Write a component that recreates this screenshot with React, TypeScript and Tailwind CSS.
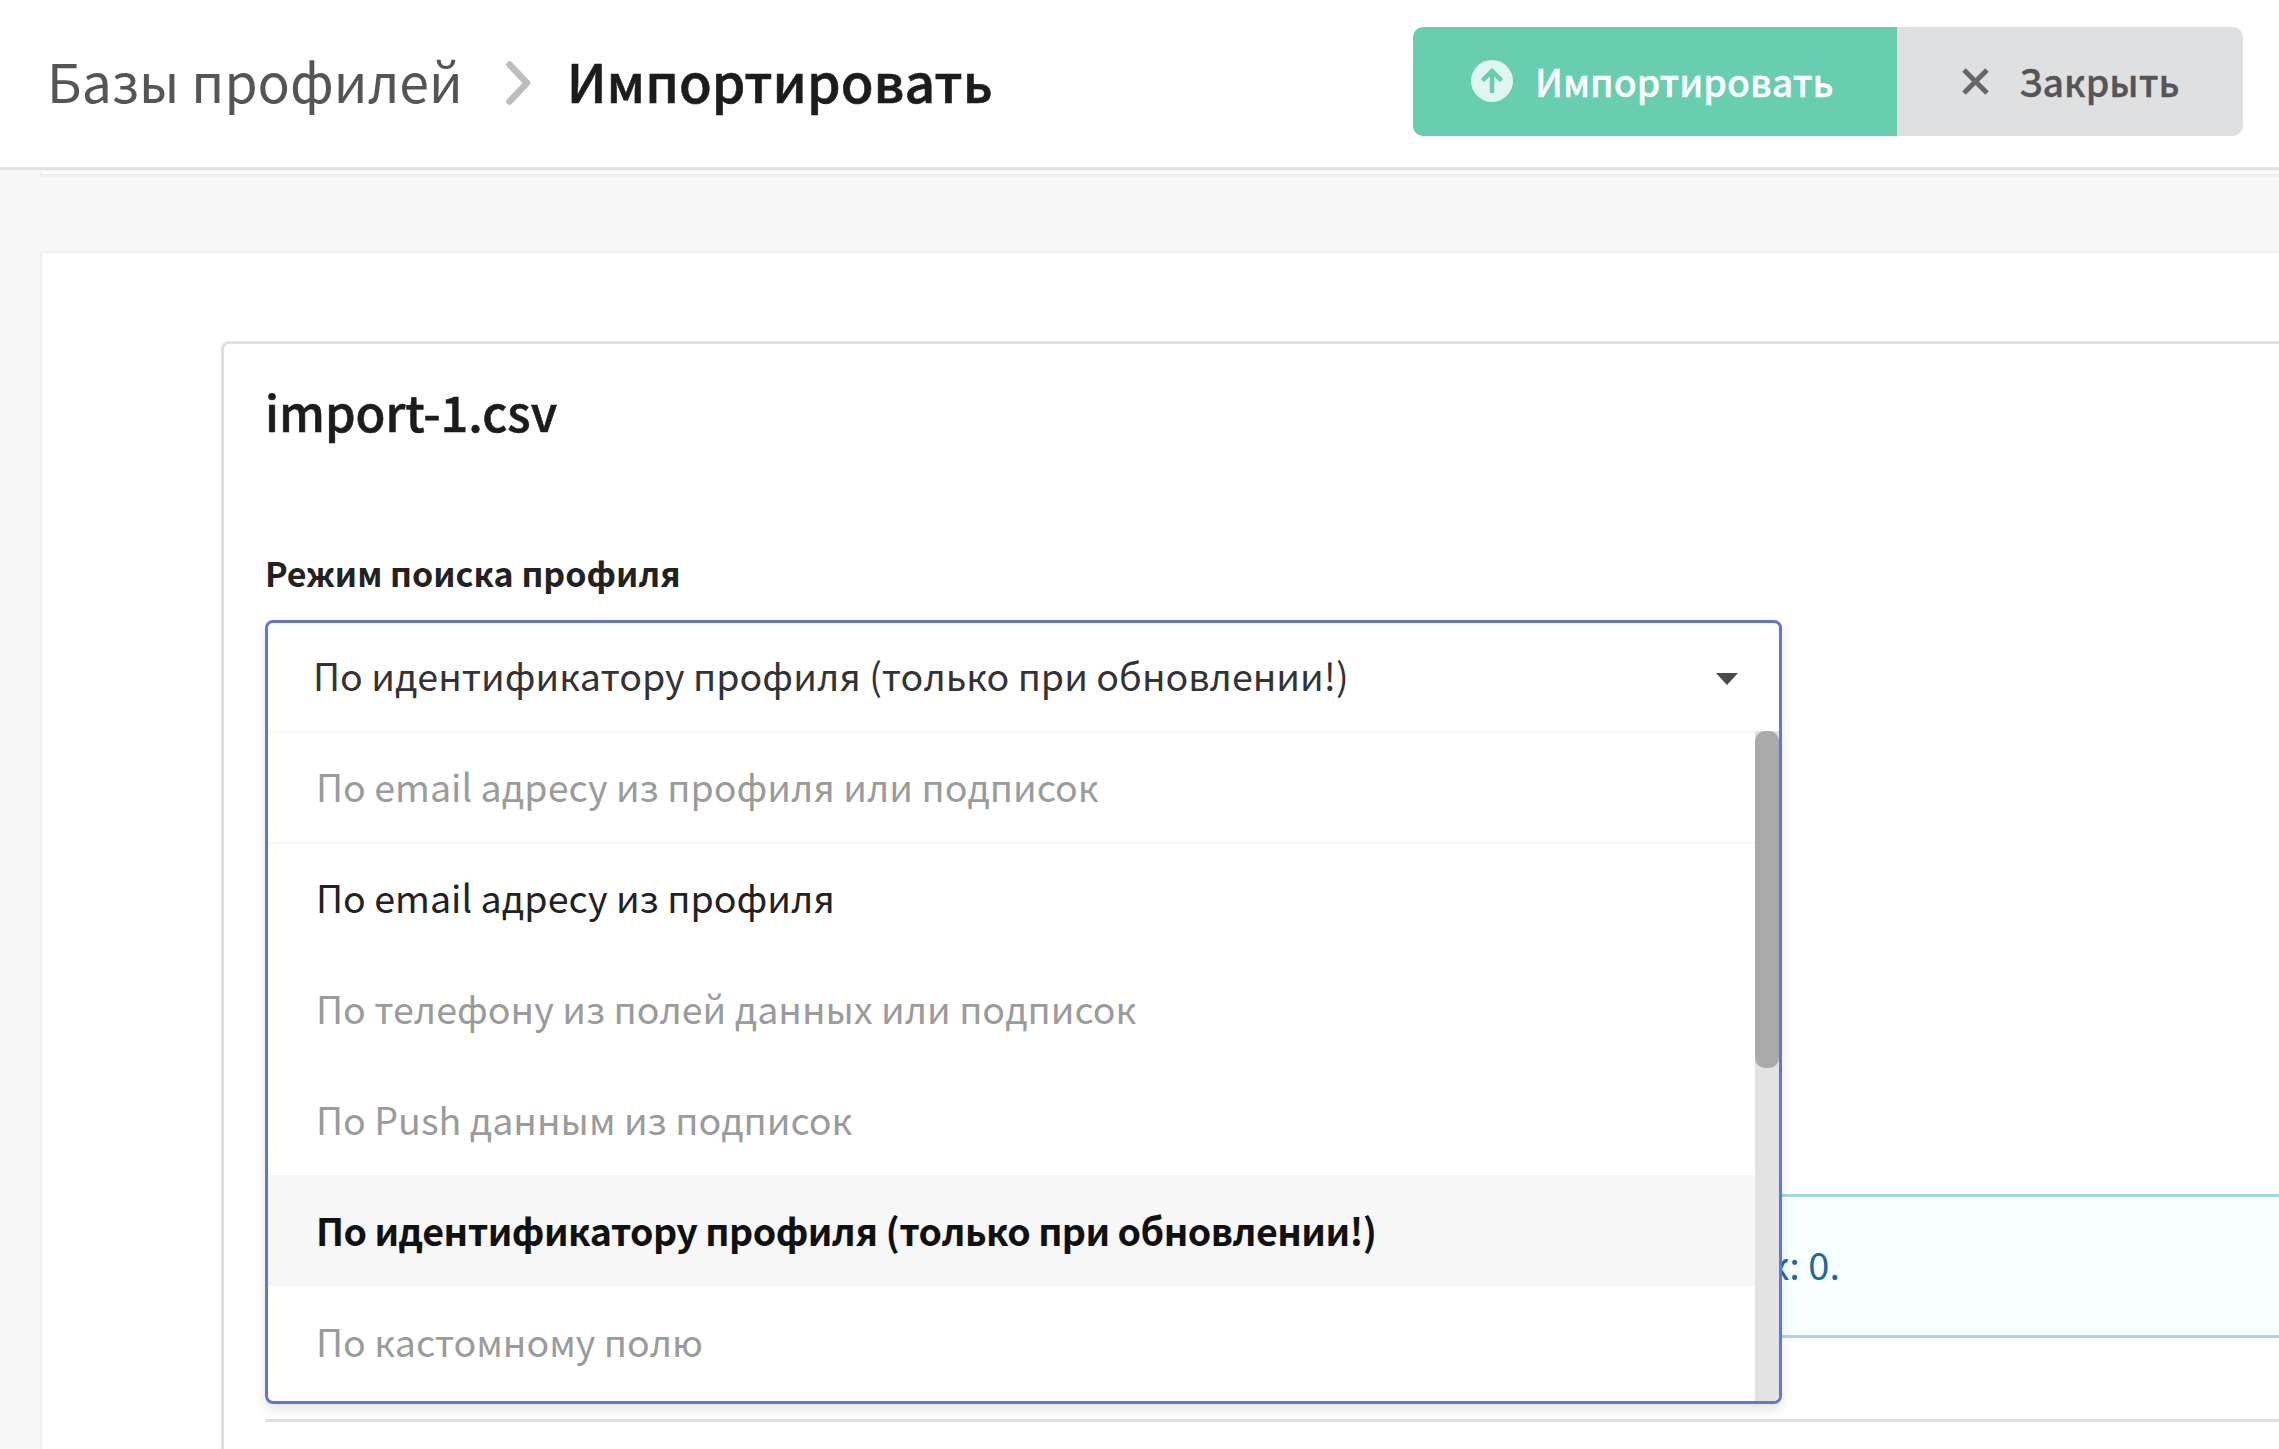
import React from 'react';

const options = [
    { label: 'По email адресу из профиля или подписок', className: 'text-[#9b9b9b] shadow-[inset_0_2px_0_#f8f8f8]' },
    { label: 'По email адресу из профиля', className: 'text-[#222222] shadow-[inset_0_2px_0_#f8f8f8]' },
    { label: 'По телефону из полей данных или подписок', className: 'text-[#9b9b9b] shadow-[inset_0_2px_0_#fefefe]' },
    { label: 'По Push данным из подписок', className: 'text-[#9b9b9b] shadow-[inset_0_2px_0_#fefefe]' },
    { label: 'По идентификатору профиля (только при обновлении!)', className: 'text-[#111111] font-semibold tracking-[-0.55px] bg-[#f7f7f7]' },
    { label: 'По кастомному полю', className: 'text-[#9b9b9b]' },
];

const App: React.FC = () => {
    return (
        <div className="h-[1449px] overflow-hidden flex flex-col bg-[#f7f7f7] font-['Noto_Sans_CJK_SC','Noto_Sans',sans-serif]">
            {/* Header */}
            <header className="h-[170px] shrink-0 bg-white border-b-[3px] border-[#e0e0e0] flex items-start justify-between pl-[47px] pr-[36px]">
                <div className="flex items-center h-[160px] text-[53.5px]">
                    <span className="text-[#555555]">Базы профилей</span>
                    <svg className="w-[25px] h-[44px] ml-[43px] mr-[36px] mt-[6px]" viewBox="0 0 25 44" fill="none" stroke="#bdbdbd" strokeWidth="6.5" strokeLinecap="round" strokeLinejoin="round">
                        <path d="M3.5 3.5L21 22 3.5 40.5" />
                    </svg>
                    <span className="text-[#1c1c1c] font-medium [-webkit-text-stroke:0.6px_#1c1c1c]">Импортировать</span>
                </div>
                <div className="flex mt-[27px] h-[109px] text-[37.5px] font-medium">
                    <button className="w-[484px] bg-[#67ceb0] text-white rounded-l-[10px] flex items-center pl-[58px] gap-[22px]">
                        <svg className="w-[42px] h-[42px] shrink-0 -mt-[2px]" viewBox="0 0 42 42" fill="none">
                            <circle cx="21" cy="21" r="21" fill="#e1f5f0" />
                            <path d="M21 33V11M11.5 20.5L21 11l9.5 9.5" stroke="#67ceb0" strokeWidth="4.5" />
                        </svg>
                        <span className="[-webkit-text-stroke:0.3px_#ffffff]">Импортировать</span>
                    </button>
                    <button className="w-[346px] bg-[#dfe0e2] text-[#555555] rounded-r-[10px] flex items-center pl-[65px] gap-[30px]">
                        <svg className="w-[27px] h-[27px] shrink-0" viewBox="0 0 27 27" fill="none" stroke="#666666" strokeWidth="5">
                            <path d="M2 2l23 23M25 2L2 25" />
                        </svg>
                        <span className="[-webkit-text-stroke:0.3px_#555555]">Закрыть</span>
                    </button>
                </div>
            </header>

            {/* Page body */}
            <main className="flex-1 pl-[40px]">
                <div className="h-[5px] mt-[2px] bg-white border-b-[3px] border-l-2 border-[#f0f0f0]" />
                <div className="mt-[74px] h-[1250px] -mr-8 bg-white border-t-2 border-l-2 border-[#f0f0f0] pl-[179px] pt-[88px]">
                    <section className="h-[1200px] border-t-[3px] border-l-[3px] border-[#e0e0e0] rounded-tl-[8px] pl-[41px]">
                        <h2 className="h-[146px] pt-[32px] text-[48.7px] leading-[70px] font-medium [-webkit-text-stroke:0.6px_#1c1c1c] text-[#1c1c1c]">import-1.csv</h2>

                        <div className="h-[130px] pt-[58px] text-[34px] leading-[50px] font-semibold text-[#222222]">Режим поиска профиля</div>

                        {/* Select with open menu */}
                        <div className="relative h-[111px]">
                            <div className="absolute z-10 top-0 left-0 w-[1517px] h-[784px] bg-white border-[3px] border-[#6377cf] rounded-[8px] shadow-[0_6px_12px_rgba(0,0,0,0.1)] overflow-hidden flex flex-col">
                                <div className="h-[108px] shrink-0 flex items-center justify-between pb-[4px] pl-[45px] pr-[41px] text-[37.6px] text-[#333333]">
                                    <span>По идентификатору профиля (только при обновлении!)</span>
                                    <svg className="w-[22px] h-[12px] mt-[7px]" viewBox="0 0 22 12" fill="#4a4a4a">
                                        <path d="M0 0h22L11 12z" />
                                    </svg>
                                </div>
                                <div className="flex-1 flex min-h-0">
                                    <ul className="flex-1 text-[37.6px]">
                                        {options.map((o) => (
                                            <li key={o.label} className={`h-[111px] flex items-center pl-[48px] ${o.className}`}>
                                                {o.label}
                                            </li>
                                        ))}
                                    </ul>
                                    <div className="w-[24px] bg-[#e3e3e3]">
                                        <div className="h-[337px] bg-[#aaaaaa] rounded-[10px]" />
                                    </div>
                                </div>
                            </div>
                        </div>

                        {/* Info box, mostly under the menu */}
                        <div className="mt-[463px] h-[144px] border-y-[3px] border-[#a5d8e0] bg-[#f8ffff] flex items-center pb-[6px] text-[#1f6a96] text-[38px]">
                            <div className="w-[1575px] text-right">Количество ошибок: 0.</div>
                        </div>

                        <div className="mt-[81px] border-t-[3px] border-[#e0e0e0]" />
                    </section>
                </div>
            </main>
        </div>
    );
};

export default App;
